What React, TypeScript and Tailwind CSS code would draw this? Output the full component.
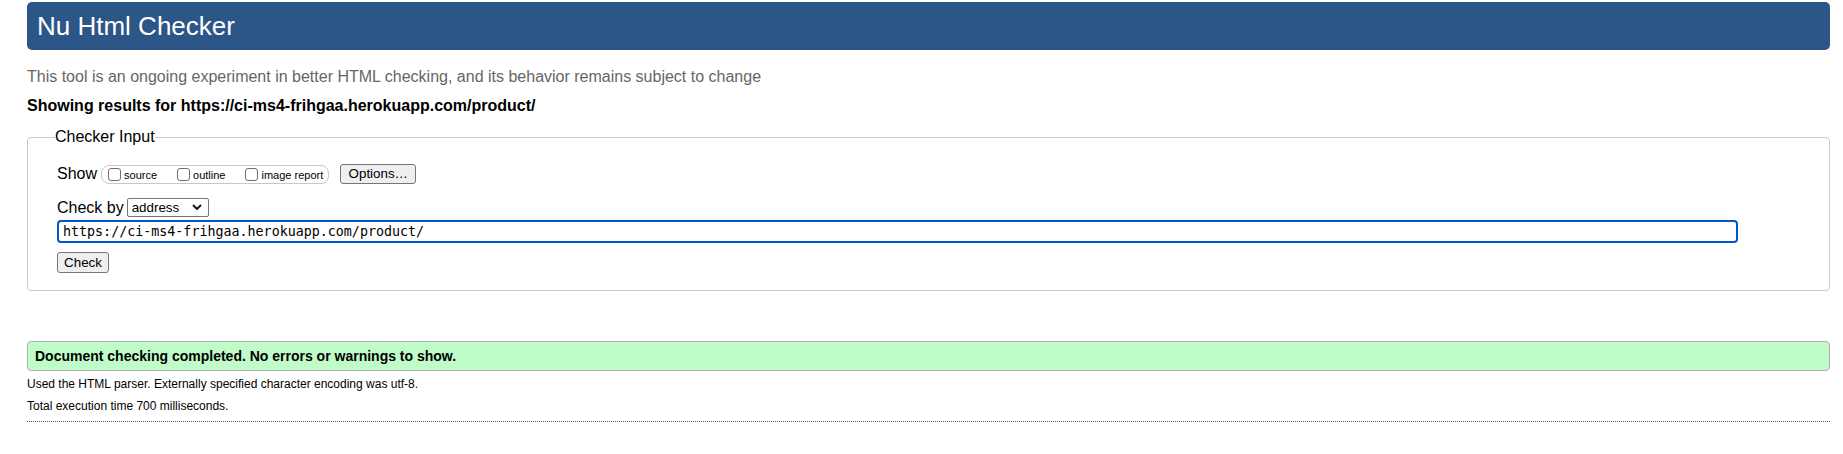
export default function App() {
  const url = 'https://ci-ms4-frihgaa.herokuapp.com/product/'

  return (
    <main className="min-h-screen bg-white pl-[27px] pr-[13px] pt-[2px] font-['Liberation_Sans',Arial,sans-serif] text-black">
      {/* header bar */}
      <h1 className="flex h-[48px] items-center rounded-[5px] bg-[#2c5588] pl-[10px] pb-[1px] text-[26px] font-normal leading-none text-white">
        Nu Html Checker
      </h1>

      <p className="mt-[17px] text-[16px] leading-[19px] text-[#666]">
        This tool is an ongoing experiment in better HTML checking, and its behavior remains subject to change
      </p>
      <p className="mt-[10px] text-[16px] font-bold leading-[19px]">Showing results for {url}</p>

      <fieldset className="mt-[13px] min-w-0 rounded-[4px] border border-[#c8c8c8] pl-[29px] pt-[18px] pb-[17px]">
        <legend className="-ml-[2px] text-[16px] leading-[18px]">Checker Input</legend>

        {/* show options */}
        <div className="flex h-[20px] items-center">
          <span className="text-[16px] leading-[18px]">Show</span>
          <div className="ml-[4px] flex h-[19px] items-center rounded-[8px] border border-[#c8c8c8] pl-[6px] pr-[5px] text-[11px]">
            {['source', 'outline', 'image report'].map((label, i) => (
              <label key={label} className={'flex items-center ' + (i > 0 ? 'ml-[20px]' : '')}>
                <input
                  type="checkbox"
                  className="h-[13px] w-[13px] appearance-none rounded-[3px] border border-[#6f6f6f] bg-white"
                />
                <span className="ml-[3px] mt-[2px] leading-[13px]">{label}</span>
              </label>
            ))}
          </div>
          <button className="ml-[11px] h-[20px] w-[76px] rounded-[3px] border border-[#767676] bg-[#efefef] text-[13.33px] leading-[16px]">
            Options…
          </button>
        </div>

        {/* check by */}
        <div className="mt-[14px] flex h-[19px] items-center">
          <span className="text-[16px] leading-[18px]">Check by</span>
          <div className="ml-[3px] flex h-[19px] w-[82px] items-center justify-between rounded-[2px] border border-[#767676] bg-white pl-[4px] pr-[6px] text-[13.33px]">
            <span>address</span>
            <svg width="10" height="7" viewBox="0 0 10 7" fill="none">
              <path d="M1.5 1.5 L5 5 L8.5 1.5" stroke="#111" strokeWidth="1.8" strokeLinecap="round" strokeLinejoin="round" />
            </svg>
          </div>
        </div>

        <input
          type="text"
          readOnly
          value={url}
          className="mt-[3px] block h-[23px] w-[1681px] rounded-[4px] border-2 border-[#0057c6] pl-[4px] font-['DejaVu_Sans_Mono',monospace] text-[13.33px] leading-[19px] outline-none"
        />

        <button className="mt-[9px] block h-[21px] w-[52px] rounded-[3px] border border-[#767676] bg-[#efefef] text-[13.33px] leading-[16px]">
          Check
        </button>
      </fieldset>

      {/* result */}
      <div className="mt-[50px] flex h-[30px] items-center rounded-[4px] border border-[#b0b0b0] bg-[#bffcc8] pl-[7px] text-[14px] font-bold">
        Document checking completed. No errors or warnings to show.
      </div>

      <p className="mt-[2px] text-[12px] leading-[22px]">Used the HTML parser. Externally specified character encoding was utf-8.</p>
      <p className="text-[12px] leading-[22px]">Total execution time 700 milliseconds.</p>
      <hr className="mt-[4px] border-t border-dotted border-[#555]" />
    </main>
  )
}
